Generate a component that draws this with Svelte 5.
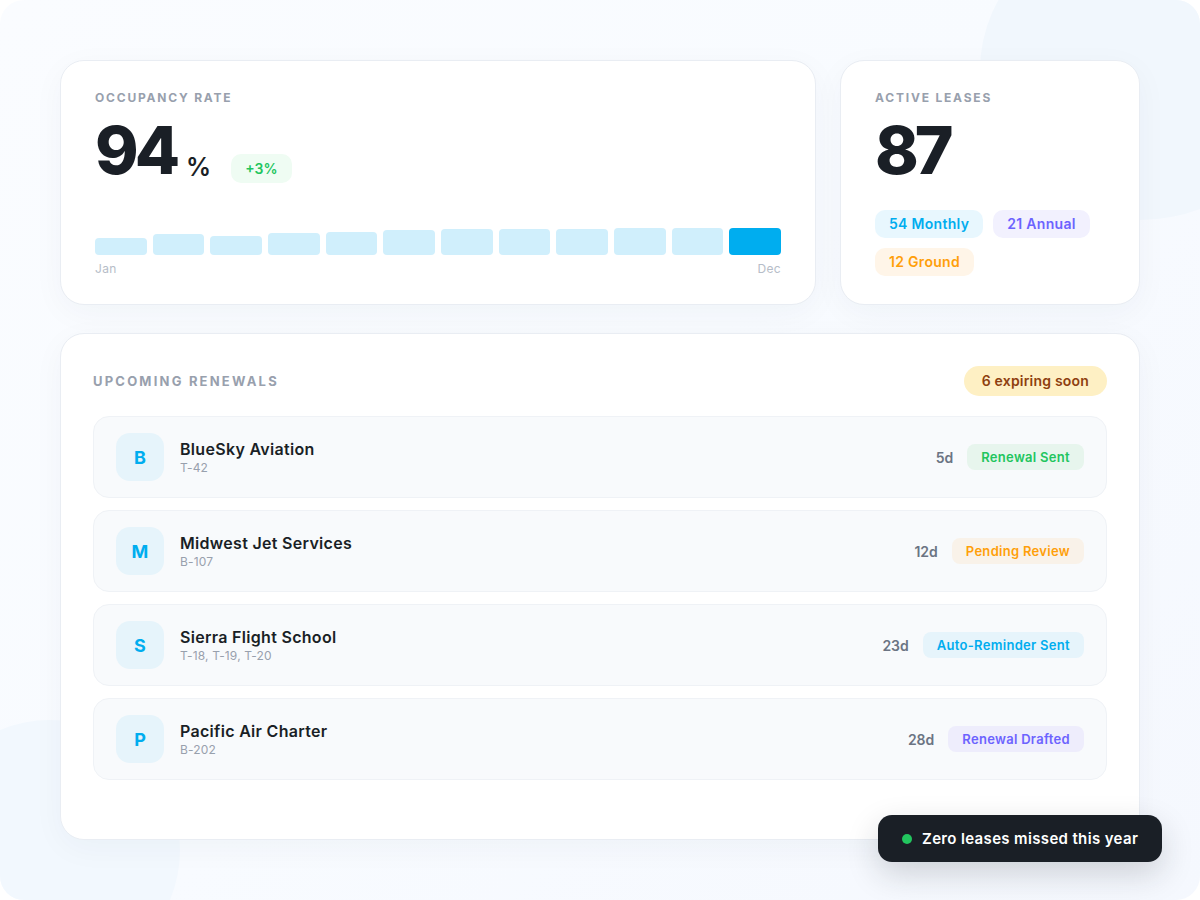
<script lang="ts">
  const heights = [17, 21, 19, 22, 23, 25, 26, 26, 26, 27, 27, 27];

  const renewals = [
    { letter: "B", name: "BlueSky Aviation", tail: "T-42", days: "5d", status: "Renewal Sent", tone: "green" },
    { letter: "M", name: "Midwest Jet Services", tail: "B-107", days: "12d", status: "Pending Review", tone: "orange" },
    { letter: "S", name: "Sierra Flight School", tail: "T-18, T-19, T-20", days: "23d", status: "Auto-Reminder Sent", tone: "blue" },
    { letter: "P", name: "Pacific Air Charter", tail: "B-202", days: "28d", status: "Renewal Drafted", tone: "purple" },
  ];
</script>

<div class="page">
  <div class="blob top"></div>
  <div class="blob bottom"></div>

  <div class="content">
    <div class="top-row">
      <section class="card occupancy">
        <div class="label">OCCUPANCY RATE</div>
        <div class="metric">
          <span class="big">94</span>
          <span class="unit">%</span>
          <span class="delta">+3%</span>
        </div>
        <div class="bars">
          {#each heights as h, i}
            <div class="bar" class:current={i === heights.length - 1} style="height:{h}px"></div>
          {/each}
        </div>
        <div class="axis"><span>Jan</span><span>Dec</span></div>
      </section>

      <section class="card leases">
        <div class="label">ACTIVE LEASES</div>
        <div class="big leases-num">87</div>
        <div class="chips">
          <span class="chip blue">54 Monthly</span>
          <span class="chip purple">21 Annual</span>
          <span class="chip orange">12 Ground</span>
        </div>
      </section>
    </div>

    <section class="card renewals">
      <div class="head">
        <div class="label wide">UPCOMING RENEWALS</div>
        <span class="soon">6 expiring soon</span>
      </div>
      <div class="list">
        {#each renewals as r (r.name)}
          <div class="row">
            <div class="avatar">{r.letter}</div>
            <div class="who">
              <div class="name">{r.name}</div>
              <div class="tail">{r.tail}</div>
            </div>
            <div class="days">{r.days}</div>
            <span class="status {r.tone}">{r.status}</span>
          </div>
        {/each}
      </div>
    </section>
  </div>

  <div class="toast">
    <span class="dot"></span>
    Zero leases missed this year
  </div>
</div>

<style>
  :global(body) {
    margin: 0;
    background: #fff;
  }
  .page {
    position: relative;
    width: 1200px;
    height: 900px;
    overflow: hidden;
    border-radius: 24px;
    background: linear-gradient(135deg, #fafcff 0%, #f8fbff 50%, #f5f8fe 100%);
    font-family: Inter, "Open Sans", sans-serif;
    color: #1a1f26;
  }
  .blob {
    position: absolute;
    background: #f1f7fd;
  }
  .blob.top {
    left: 980px;
    top: -80px;
    width: 320px;
    height: 300px;
    border-radius: 50%;
  }
  .blob.bottom {
    left: -80px;
    top: 720px;
    width: 260px;
    height: 260px;
    border-radius: 50%;
    background: #f2f8fe;
  }
  .content {
    position: relative;
    padding: 60px;
    display: flex;
    flex-direction: column;
    gap: 28px;
  }
  .top-row {
    display: grid;
    grid-template-columns: 756px 300px;
    gap: 24px;
    height: 245px;
  }
  .card {
    box-sizing: border-box;
    background: #fff;
    border: 1px solid #e9edf3;
    border-radius: 24px;
    box-shadow: 0 8px 32px rgba(26, 40, 70, 0.04);
  }
  .occupancy,
  .leases {
    padding: 29px 34px 24px;
  }
  .label {
    font-size: 12px;
    line-height: 16px;
    font-weight: 700;
    letter-spacing: 1.8px;
    color: #98a0ad;
  }
  .label.wide {
    font-size: 13px;
    letter-spacing: 2.2px;
  }
  .metric {
    display: flex;
    align-items: flex-end;
    height: 70px;
    margin-top: 5px;
  }
  .big {
    font-size: 66px;
    line-height: 70px;
    font-weight: 800;
    letter-spacing: -4px;
    margin-bottom: -4px;
    color: #1a1f26;
  }
  .unit {
    font-size: 25px;
    font-weight: 600;
    line-height: 26px;
    margin-left: 10px;
    margin-bottom: 1px;
  }
  .delta {
    margin-left: 20px;
    margin-bottom: -2px;
    padding: 0 14px;
    height: 29px;
    line-height: 29px;
    border-radius: 10px;
    background: #effcf3;
    color: #22c55e;
    font-size: 14px;
    font-weight: 600;
  }
  .bars {
    display: flex;
    align-items: flex-end;
    gap: 6px;
    height: 28px;
    margin-top: 46px;
  }
  .bar {
    flex: 1;
    background: #d0effc;
    border-radius: 4px;
  }
  .bar.current {
    background: #00adef;
  }
  .axis {
    display: flex;
    justify-content: space-between;
    margin-top: 6px;
    font-size: 12px;
    line-height: 16px;
    letter-spacing: 0.3px;
    color: #b6bdc8;
  }
  .leases-num {
    margin-top: 9px;
  }
  .chips {
    display: flex;
    flex-wrap: wrap;
    gap: 10px;
    margin-top: 29px;
  }
  .chip {
    height: 28px;
    line-height: 28px;
    padding: 0 14px;
    border-radius: 10px;
    font-size: 14px;
    font-weight: 600;
    letter-spacing: 0.3px;
  }
  .chip.blue { background: #e8f7fe; color: #00adef; }
  .chip.purple { background: #f2f1fe; color: #6c63ff; }
  .chip.orange { background: #fff5e8; color: #ff9f0a; }
  .renewals {
    height: 507px;
    padding: 32px;
  }
  .head {
    display: flex;
    align-items: center;
    justify-content: space-between;
    margin-bottom: 20px;
  }
  .soon {
    height: 30px;
    line-height: 30px;
    padding: 0 18px;
    border-radius: 15px;
    background: #fef0c4;
    color: #8e3f10;
    font-size: 14px;
    font-weight: 600;
    letter-spacing: 0.2px;
  }
  .list {
    display: flex;
    flex-direction: column;
    gap: 12px;
  }
  .row {
    box-sizing: border-box;
    height: 82px;
    display: flex;
    align-items: center;
    padding: 0 22px;
    background: #f8fafc;
    border: 1px solid #eff2f6;
    border-radius: 16px;
  }
  .avatar {
    width: 48px;
    height: 48px;
    display: flex;
    align-items: center;
    justify-content: center;
    border-radius: 14px;
    background: #e6f4fb;
    color: #00adef;
    font-size: 18px;
    font-weight: 700;
  }
  .who {
    flex: 1;
    margin-left: 16px;
    padding-top: 2px;
  }
  .name {
    font-size: 16px;
    line-height: 20px;
    font-weight: 600;
    letter-spacing: 0.3px;
    color: #1a1f26;
  }
  .tail {
    font-size: 12px;
    line-height: 18px;
    letter-spacing: 0.15px;
    color: #98a0ad;
  }
  .days {
    font-size: 14px;
    font-weight: 600;
    color: #6b7483;
    margin-right: 14px;
  }
  .status {
    height: 26px;
    line-height: 26px;
    padding: 0 14px;
    border-radius: 8px;
    font-size: 13px;
    font-weight: 600;
    letter-spacing: 0.3px;
  }
  .status.green { background: #e7f5ed; color: #22c55e; }
  .status.orange { background: #f9f2e9; color: #ff9f0a; }
  .status.blue { background: #e6f4fb; color: #00adef; }
  .status.purple { background: #eeedfc; color: #6c63ff; }
  .toast {
    position: absolute;
    left: 878px;
    top: 815px;
    width: 284px;
    height: 47px;
    box-sizing: border-box;
    display: flex;
    align-items: center;
    gap: 10px;
    padding-left: 24px;
    border-radius: 14px;
    background: #1a1f26;
    color: #fff;
    font-size: 15px;
    font-weight: 600;
    letter-spacing: 0.35px;
    box-shadow: 0 12px 32px rgba(26, 31, 38, 0.18);
  }
  .dot {
    width: 10px;
    height: 10px;
    border-radius: 50%;
    background: #22c55e;
  }
</style>
